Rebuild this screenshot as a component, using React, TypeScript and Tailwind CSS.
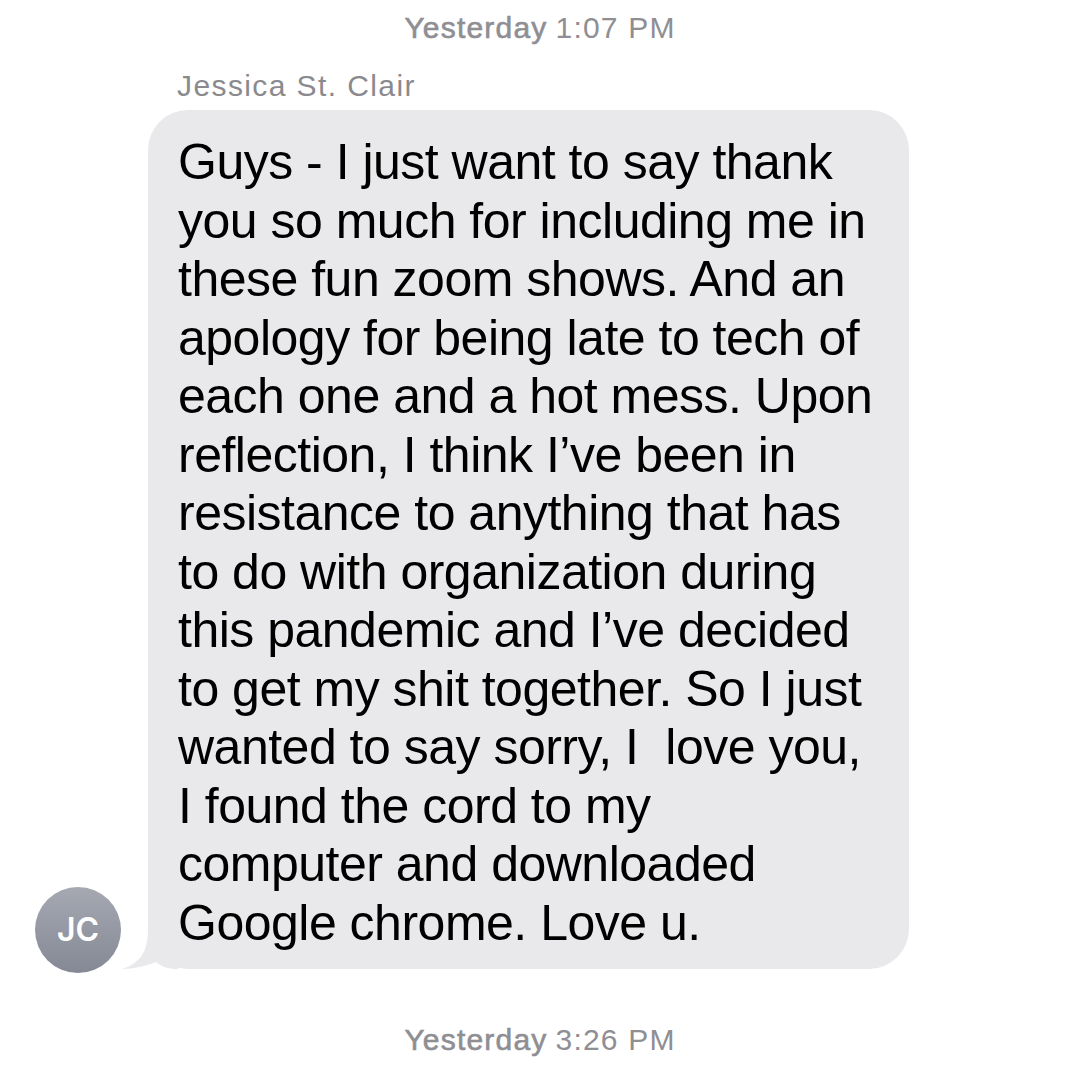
import React from "react";

const lines = [
  "Guys - I just want to say thank",
  "you so much for including me in",
  "these fun zoom shows. And an",
  "apology for being late to tech of",
  "each one and a hot mess. Upon",
  "reflection, I think I’ve been in",
  "resistance to anything that has",
  "to do with organization during",
  "this pandemic and I’ve decided",
  "to get my shit together. So I just",
  "wanted to say sorry, I  love you,",
  "I found the cord to my",
  "computer and downloaded",
  "Google chrome. Love u.",
];

function Stamp({ day, time }: { day: string; time: string }) {
  return (
    <div className="flex items-center justify-center text-[30px] leading-[34px] text-[#8e8e93] tracking-[1.2px]">
      <span className="[-webkit-text-stroke:0.6px_#8e8e93]">{day}</span>
      <span className="ml-[8px]">{time}</span>
    </div>
  );
}

export default function App() {
  return (
    <div
      className="w-[1080px] h-[1080px] bg-white flex flex-col overflow-hidden"
      style={{ fontFamily: "'Liberation Sans', Arial, sans-serif" }}
    >
      <div className="pt-[11px]">
        <Stamp day="Yesterday" time="1:07 PM" />
      </div>
      <div className="pt-[24px] pb-[7px] pl-[177px] text-[30px] leading-[34px] tracking-[1.4px] text-[#8a8a8e]">
        Jessica St. Clair
      </div>
      <div className="flex items-end pl-[35px] gap-[27px]">
        <div
          className="w-[86px] h-[86px] rounded-full bg-gradient-to-b from-[#a6a9b2] to-[#858995] flex items-center justify-center text-white text-[32px] font-semibold -mb-[4px] shrink-0"
          style={{ fontFamily: "Inter, sans-serif" }}
        >
          JC
        </div>
        <div className="relative w-[761px] h-[859px] rounded-[40px] bg-[#e9e9eb] pl-[30px] pt-[23px]">
          <svg
            className="absolute left-[-26px] bottom-0"
            width="56"
            height="40"
            viewBox="0 0 56 40"
          >
            <path
              d="M26 0 C26 20 20 34 0 40 C12 40 24 37 34 33 C40 38 46 40 56 40 L56 0 Z"
              fill="#e9e9eb"
            />
          </svg>
          <div className="relative text-[50px] leading-[58.5px] tracking-[-0.5px] text-black">
            {lines.map((l, i) => (
              <div key={i} className="whitespace-pre">
                {l}
              </div>
            ))}
          </div>
        </div>
      </div>
      <div className="pt-[54px]">
        <Stamp day="Yesterday" time="3:26 PM" />
      </div>
    </div>
  );
}
